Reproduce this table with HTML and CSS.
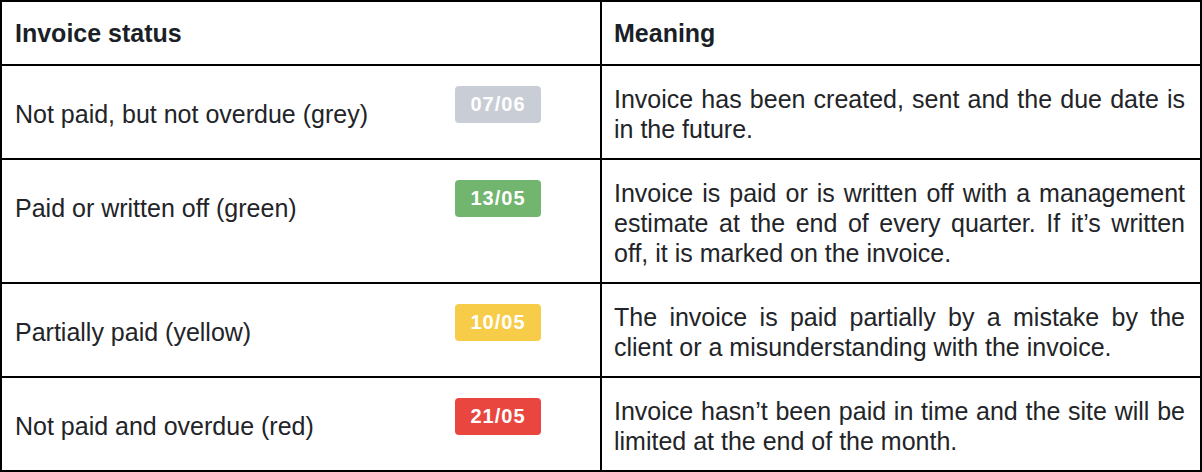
FILE: index.html
```html
<!DOCTYPE html>
<html>
<head>
<meta charset="utf-8">
<link rel="stylesheet" href="styles.css">
</head>
<body>
<div class="table">
  <div class="row head">
    <div class="hcell first">Invoice status</div>
    <div class="hcell">Meaning</div>
  </div>
  <div class="row">
    <div class="cell status"><span class="label">Not paid, but not overdue (grey)</span><span class="badge grey">07/06</span></div>
    <div class="cell meaning">Invoice has been created, sent and the due date is in the future.</div>
  </div>
  <div class="row">
    <div class="cell status"><span class="label">Paid or written off (green)</span><span class="badge green">13/05</span></div>
    <div class="cell meaning">Invoice is paid or is written off with a management estimate at the end of every quarter. If it’s written off, it is marked on the invoice.</div>
  </div>
  <div class="row">
    <div class="cell status"><span class="label">Partially paid (yellow)</span><span class="badge yellow">10/05</span></div>
    <div class="cell meaning">The invoice is paid partially by a mistake by the client or a misunderstanding with the invoice.</div>
  </div>
  <div class="row">
    <div class="cell status"><span class="label">Not paid and overdue (red)</span><span class="badge red">21/05</span></div>
    <div class="cell meaning">Invoice hasn’t been paid in time and the site will be limited at the end of the month.</div>
  </div>
</div>
</body>
</html>
```

FILE: styles.css
```css
html, body {
  margin: 0;
  padding: 0;
  background: #fff;
}

body {
  font-family: "Liberation Sans", Arial, sans-serif;
  color: #222428;
}

.table {
  width: 1202px;
  height: 472px;
  box-sizing: border-box;
  border: 2px solid #000;
}

.row {
  display: grid;
  grid-template-columns: 600px 598px;
  border-bottom: 2px solid #000;
}

.row:last-child {
  border-bottom: none;
}

.head {
  height: 62px;
}

.hcell {
  box-sizing: border-box;
  display: flex;
  align-items: center;
  padding: 0 0 0 12px;
  font-weight: bold;
  font-size: 25px;
  color: #1b1f27;
}

.hcell.first {
  border-right: 2px solid #000;
  padding-left: 13px;
}

.cell {
  box-sizing: border-box;
}

.cell.status {
  border-right: 2px solid #000;
  padding: 0 59px 0 13px;
  display: flex;
  justify-content: space-between;
  align-items: flex-start;
}

.label {
  font-size: 25px;
  line-height: 30px;
  margin-top: 33px;
}

.cell.meaning {
  font-size: 25px;
  line-height: 30px;
  padding: 18px 15px 14px 12px;
  text-align: justify;
}

.badge {
  margin-top: 20px;
  width: 86px;
  height: 37px;
  border-radius: 4px;
  display: flex;
  align-items: center;
  justify-content: center;
  color: #fff;
  font-weight: bold;
  font-size: 20px;
  letter-spacing: 1px;
}

.badge.grey { background: #c9ced6; }
.badge.green { background: #71b56e; }
.badge.yellow { background: #f7cc48; }
.badge.red { background: #e8463f; }
```
